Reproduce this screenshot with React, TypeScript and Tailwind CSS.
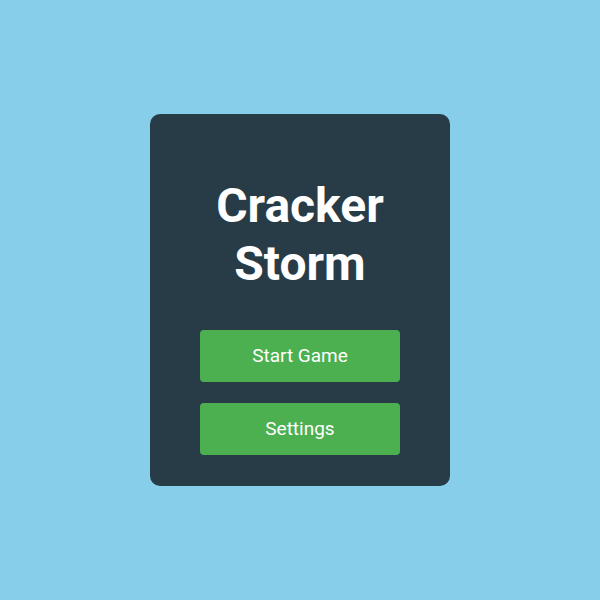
export default function App() {
  return (
    <div className="w-[600px] h-[600px] bg-[#87ceeb] flex items-center justify-center" style={{ fontFamily: 'Roboto, "Liberation Sans", sans-serif' }}>
      <div className="w-[300px] h-[372px] bg-[#273c47] rounded-[10px] flex flex-col items-center pt-[63px]">
        <h1 className="text-white font-bold text-[48px] leading-[1.2] text-center">Cracker<br />Storm</h1>
        <div className="mt-[38px] flex flex-col gap-[21px]">
          <button className="w-[200px] h-[52px] bg-[#4caf50] rounded-[4px] text-white text-[19px]">Start Game</button>
          <button className="w-[200px] h-[52px] bg-[#4caf50] rounded-[4px] text-white text-[19px]">Settings</button>
        </div>
      </div>
    </div>
  );
}
